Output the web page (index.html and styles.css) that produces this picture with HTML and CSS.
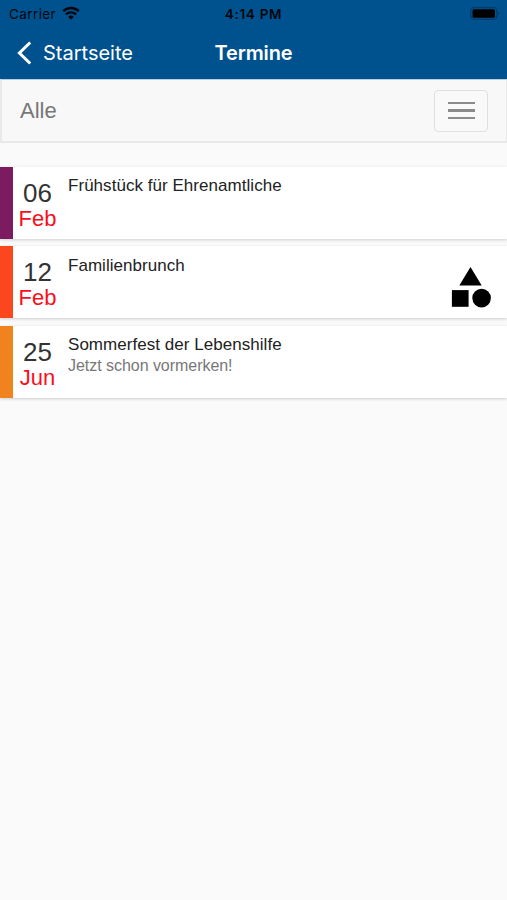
FILE: index.html
```html
<!DOCTYPE html>
<html lang="de">
<head>
    <meta charset="utf-8">
    <title>Termine</title>
    <link rel="stylesheet" href="styles.css">
</head>
<body>
    <header class="header">
        <div class="status">
            <div class="carrier">
                <span>Carrier</span>
                <svg class="wifi" viewBox="0 0 18 14" width="18" height="14">
                    <path d="M1.2 5.2a11.2 11.2 0 0 1 15.6 0" fill="none" stroke="#00060c" stroke-width="2.5"/>
                    <path d="M4 8.4a7.2 7.2 0 0 1 10 0" fill="none" stroke="#00060c" stroke-width="2.3"/>
                    <path d="M6.3 10.9a3.9 3.9 0 0 1 5.4 0L9 13.7z" fill="#00060c"/>
                </svg>
            </div>
            <div class="time">4:14 PM</div>
            <svg class="battery" viewBox="0 0 30 13" width="30" height="13">
                <rect x="0.8" y="0.7" width="26" height="11.6" rx="3.2" fill="none" stroke="#003b6c" stroke-width="1.3"/>
                <rect x="2.5" y="2.2" width="22.5" height="8.6" rx="1.6" fill="#000"/>
                <path d="M28.2 4.5a2.4 2.4 0 0 1 0 4z" fill="#003b6c"/>
            </svg>
        </div>
        <div class="nav">
            <div class="back">
                <svg viewBox="0 0 16 24" width="16" height="24">
                    <path d="M14.2 1.5L3.4 12l10.8 10.5" fill="none" stroke="#fff" stroke-width="3"/>
                </svg>
                <span>Startseite</span>
            </div>
            <h1 class="title">Termine</h1>
            <div></div>
        </div>
    </header>

    <div class="filter">
        <span>Alle</span>
        <button class="menu-button">
            <span class="bar"></span>
            <span class="bar"></span>
            <span class="bar"></span>
        </button>
    </div>

    <main class="list">
        <div class="event purple">
            <div class="date">
                <div class="day">06</div>
                <div class="month">Feb</div>
            </div>
            <div class="info">
                <div class="name">Frühstück für Ehrenamtliche</div>
            </div>
        </div>
        <div class="event red">
            <div class="date">
                <div class="day">12</div>
                <div class="month">Feb</div>
            </div>
            <div class="info">
                <div class="name">Familienbrunch</div>
            </div>
            <svg class="shapes" viewBox="0 0 40 41" width="40" height="41">
                <path d="M19.5 0L30.7 18.4H8.3z"/>
                <rect x="0.9" y="23.1" width="16.7" height="16.7"/>
                <circle cx="30.6" cy="31.1" r="9.3"/>
            </svg>
        </div>
        <div class="event orange">
            <div class="date">
                <div class="day">25</div>
                <div class="month">Jun</div>
            </div>
            <div class="info">
                <div class="name">Sommerfest der Lebenshilfe</div>
                <div class="note">Jetzt schon vormerken!</div>
            </div>
        </div>
    </main>
</body>
</html>
```
FILE: styles.css
```css
* {
    box-sizing: border-box;
}

body {
    margin: 0;
    min-height: 100vh;
    background-color: #fafafa;
    font-family: "Liberation Sans", Arial, sans-serif;
    color: #333;
}

.header {
    height: 79px;
    background-color: #00528f;
    font-family: Inter, sans-serif;
}

.status {
    display: grid;
    grid-template-columns: 1fr auto 1fr;
    align-items: center;
    height: 27px;
    padding: 0 7px 0 9px;
    color: #00060c;
    font-size: 13.5px;
}

.carrier {
    display: flex;
    align-items: center;
    gap: 6px;
    letter-spacing: 0.4px;
}

.wifi {
    margin-top: -2px;
}

.time {
    margin-right: 2px;
    font-size: 13.5px;
    font-weight: 600;
    letter-spacing: 0.7px;
}

.battery {
    justify-self: end;
}

.nav {
    display: grid;
    grid-template-columns: 1fr auto 1fr;
    align-items: center;
    height: 51px;
    padding: 0 16px;
    color: #fff;
    font-size: 20px;
}

.back {
    display: flex;
    align-items: center;
    gap: 11px;
}

.title {
    margin: 0;
    font-size: 20px;
    font-weight: 600;
    letter-spacing: -0.1px;
}

.filter {
    display: flex;
    align-items: center;
    justify-content: space-between;
    height: 64px;
    padding: 0 18px 0 18px;
    background-color: #f8f8f8;
    border: 2px solid #e9e9e9;
    border-right-width: 1px;
    border-top: 1px solid #b5cfe1;
    color: #777;
    font-size: 22px;
}

.menu-button {
    display: flex;
    flex-direction: column;
    align-items: center;
    justify-content: center;
    gap: 5px;
    width: 54px;
    height: 42px;
    padding: 0;
    background-color: #f9f9f9;
    border: 1.5px solid #e0e0e0;
    border-radius: 4px;
}

.bar {
    width: 27px;
    height: 2.5px;
    background-color: #8b8b8b;
}

.list {
    display: flex;
    flex-direction: column;
    gap: 7.3px;
    padding-top: 24px;
}

.event {
    display: flex;
    height: 72px;
    background-color: #fff;
    border-left: 13px solid;
    box-shadow: 0 1px 3px rgba(0, 0, 0, 0.18);
}

.purple {
    border-color: #7d1b60;
}

.red {
    border-color: #fc461d;
}

.orange {
    border-color: #f0831e;
}

.date {
    width: 49px;
    padding-top: 12px;
    text-align: center;
}

.day {
    font-size: 26px;
    line-height: 28px;
}

.month {
    color: #fb0d1b;
    font-size: 22px;
    line-height: 24px;
}

.info {
    flex: 1;
    padding: 9.4px 0 0 6px;
}

.name {
    color: #222;
    font-size: 17px;
    letter-spacing: 0.04px;
    line-height: 20px;
}

.note {
    color: #777;
    font-size: 16px;
    letter-spacing: -0.04px;
    line-height: 21px;
}

.shapes {
    margin: 20.6px 16px 0 0;
}
```
